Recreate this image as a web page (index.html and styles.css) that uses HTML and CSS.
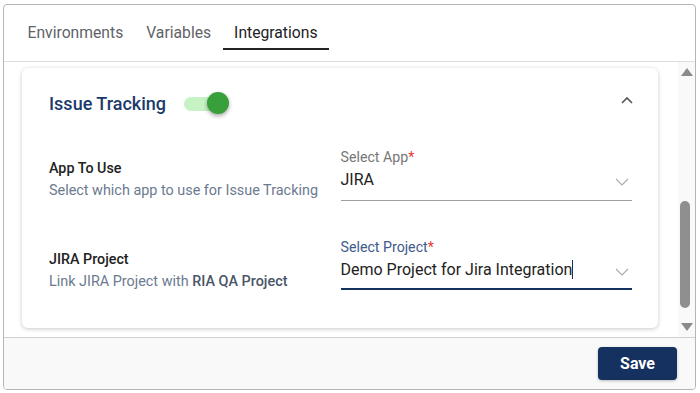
FILE: index.html
```html
<!DOCTYPE html>
<html lang="en">
<head>
	<meta charset="UTF-8">
	<meta name="viewport" content="width=device-width, initial-scale=1">
	<title>Project Settings</title>
	<link rel="stylesheet" href="styles.css">
</head>
<body>

	<div class="frame">
		<div class="tabs">
			<div class="tab">Environments</div>
			<div class="tab">Variables</div>
			<div class="tab active">Integrations</div>
		</div>

		<div class="main">
			<div class="content">
				<div class="card">
					<div class="card-head">
						<div class="card-title">Issue Tracking</div>
						<div class="toggle on">
							<div class="track"></div>
							<div class="knob"></div>
						</div>
						<svg class="collapse" width="14" height="10" viewBox="0 0 14 10">
							<path d="M2 8 L7 3 L12 8" fill="none" stroke="#555" stroke-width="1.6"/>
						</svg>
					</div>

					<div class="row">
						<div class="info">
							<div class="info-title">App To Use</div>
							<div class="info-desc">Select which app to use for Issue Tracking</div>
						</div>
						<div class="field">
							<div class="field-label">Select App<span class="req">*</span></div>
							<div class="field-value">
								<span>JIRA</span>
								<svg class="chev" width="14" height="8" viewBox="0 0 14 8">
									<path d="M1 1 L7 7 L13 1" fill="none" stroke="#aaa" stroke-width="1.1"/>
								</svg>
							</div>
						</div>
					</div>

					<div class="row row-focused">
						<div class="info">
							<div class="info-title">JIRA Project</div>
							<div class="info-desc">Link JIRA Project with <b>RIA QA Project</b></div>
						</div>
						<div class="field focused">
							<div class="field-label">Select Project<span class="req">*</span></div>
							<div class="field-value">
								<span>Demo Project for Jira Integration<i class="caret"></i></span>
								<svg class="chev" width="14" height="8" viewBox="0 0 14 8">
									<path d="M1 1 L7 7 L13 1" fill="none" stroke="#aaa" stroke-width="1.1"/>
								</svg>
							</div>
						</div>
					</div>
				</div>
			</div>

			<div class="scrollbar">
				<svg class="arrow" width="12" height="8" viewBox="0 0 12 8"><polygon points="6,0 12,8 0,8" fill="#8a8a8a"/></svg>
				<div class="scroll-track">
					<div class="thumb"></div>
				</div>
				<svg class="arrow" width="12" height="8" viewBox="0 0 12 8"><polygon points="0,0 12,0 6,8" fill="#8a8a8a"/></svg>
			</div>
		</div>

		<div class="footer">
			<button class="save-btn">Save</button>
		</div>
	</div>

</body>
</html>
```

FILE: styles.css
```css
body {
	font-family: Roboto, 'Liberation Sans', sans-serif;
	margin: 0;
	padding: 0;
	background: #fff;
}
.frame {
	margin: 4px 4px 4px 3px;
	height: 386px;
	box-sizing: border-box;
	border: 1px solid #b5b5b5;
	border-radius: 4px;
	display: flex;
	flex-direction: column;
	overflow: hidden;
}
.tabs {
	height: 57px;
	box-sizing: border-box;
	border-bottom: 1px solid #dcdcdc;
	display: flex;
	padding-left: 12px;
}
.tab {
	font-size: 15.7px;
	color: #5f6368;
	padding: 18px 11.5px 0;
	height: 45px;
	box-sizing: border-box;
	border-bottom: 2px solid transparent;
}
.tab.active {
	color: #222;
	border-bottom-color: #222;
}
.main {
	display: flex;
	height: 275px;
}
.content {
	flex: 1;
	padding: 6px 20px 0 18px;
	background: #fff;
}
.card {
	background: #fff;
	border-radius: 6px;
	height: 260px;
	box-sizing: border-box;
	box-shadow: 0 1px 4px rgba(0,0,0,0.22);
	padding: 20px 26px 0 27px;
}
.card-head {
	display: flex;
	align-items: center;
	height: 30px;
}
.card-title {
	font-size: 18px;
	font-weight: 500;
	color: #1b3a6b;
}
.toggle {
	position: relative;
	width: 40px;
	height: 24px;
	margin-left: 18px;
}
.toggle .track {
	position: absolute;
	left: 0;
	top: 6px;
	width: 36px;
	height: 14px;
	border-radius: 7px;
	background: #c6f2c6;
}
.toggle .knob {
	position: absolute;
	left: 23px;
	top: 1px;
	width: 22px;
	height: 22px;
	border-radius: 50%;
	background: #37a03a;
	box-shadow: 0 2px 4px rgba(0,0,0,0.35);
}
.collapse {
	margin-left: auto;
	margin-right: -2px;
	margin-top: -6px;
}
.row {
	display: grid;
	grid-template-columns: 1fr 1fr;
	align-items: end;
	margin-top: 31px;
}
.row + .row {
	margin-top: 38px;
}
.row-focused .info {
	margin-bottom: -2px;
}
.info-title {
	font-size: 14.3px;
	font-weight: 500;
	color: #222;
	line-height: 20px;
}
.info-desc {
	font-size: 14.4px;
	color: #6b7a90;
	line-height: 20px;
	margin-top: 3px;
}
.info-desc b {
	font-weight: 500;
	color: #4a5568;
}
.field-label {
	font-size: 14.2px;
	line-height: 16px;
	color: #777;
}
.req {
	color: #e53935;
}
.field-value {
	display: flex;
	align-items: center;
	justify-content: space-between;
	font-size: 16px;
	line-height: 24px;
	color: #222;
	margin-top: 3px;
	padding-bottom: 8px;
	border-bottom: 1px solid #9e9e9e;
}
.field.focused .field-label {
	color: #3d5a8c;
}
.field.focused .field-value {
	padding-bottom: 6px;
	border-bottom: 2px solid #15315f;
}
.caret {
	display: inline-block;
	width: 1px;
	height: 19px;
	background: #15315f;
	vertical-align: -4px;
}
.chev {
	margin-right: 3px;
	margin-top: 3px;
}
.scrollbar {
	width: 17px;
	background: #f9f9f9;
	display: flex;
	flex-direction: column;
	align-items: center;
	padding: 6px 0 6px;
	box-sizing: border-box;
}
.scroll-track {
	flex: 1;
	width: 100%;
	display: flex;
	justify-content: center;
	align-items: flex-end;
	padding: 0 0 15px;
}
.thumb {
	width: 10px;
	height: 107px;
	border-radius: 5px;
	background: #8f8f8f;
	margin-left: -4px;
}
.footer {
	flex: 1;
	border-top: 1px solid #cfcfcf;
	background: #f9f9f9;
	display: flex;
	justify-content: flex-end;
	align-items: flex-start;
	padding: 9px 18px 0 0;
}
.save-btn {
	background: #15315f;
	color: white;
	font-family: Roboto, 'Liberation Sans', sans-serif;
	font-size: 16px;
	font-weight: 700;
	width: 79px;
	height: 33px;
	border: none;
	border-radius: 4px;
	box-shadow: 0 1px 3px rgba(0,0,0,0.25);
	cursor: pointer;
}
```
